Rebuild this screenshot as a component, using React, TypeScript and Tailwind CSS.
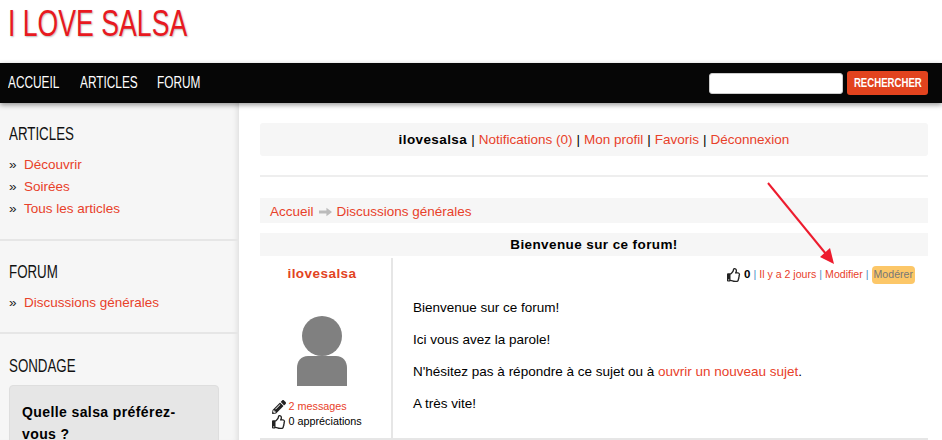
import { FaPencilAlt, FaRegThumbsUp } from "react-icons/fa";

// pas de police étroite installée : on resserre Liberation Sans à la main
function Narrow({ children }: { children: string }) {
  return <span className="inline-block origin-left scale-x-[0.74] whitespace-nowrap">{children}</span>;
}

function SideLink({ children }: { children: string }) {
  return (
    <li className="flex h-[22px] items-center">
      <span className="w-[15px] text-[#222]">»</span>
      <a className="text-[#e8412a]">{children}</a>
    </li>
  );
}

function SideTitle({ children }: { children: string }) {
  return (
    <h2 className="h-[22px] text-[18px] leading-[22px] font-normal text-[#111]">
      <Narrow>{children}</Narrow>
    </h2>
  );
}

export default function App() {
  return (
    <div className="relative h-[440px] w-[942px] overflow-hidden bg-white font-['Liberation_Sans',Arial,sans-serif] text-[13.5px] text-black">
      <header className="h-[63px] pl-[8px] pt-[4px]">
        <h1 className="text-[36px] leading-[40px] font-normal text-[#e8191f] [text-shadow:1px_1px_2px_#bbb]">
          <Narrow>I LOVE SALSA</Narrow>
        </h1>
      </header>

      <nav className="relative z-10 flex h-[40px] items-center justify-between bg-[#060606] pr-[14px] pl-[8px] shadow-[0_2px_5px_rgba(0,0,0,0.4)]">
        <ul className="flex gap-[20px] text-[16px] text-white">
          <li className="w-[52px]"><Narrow>ACCUEIL</Narrow></li>
          <li className="w-[57px]"><Narrow>ARTICLES</Narrow></li>
          <li className="w-[44px]"><Narrow>FORUM</Narrow></li>
        </ul>
        <div className="flex items-center gap-[4px]">
          <input className="h-[21px] w-[134px] rounded-[3px] border border-[#ccc] bg-white" />
          <button className="flex h-[24px] w-[81px] items-center justify-center rounded-[3px] bg-[#e2431e] text-[13px] font-bold text-white">
            <span className="inline-block scale-x-[0.74] whitespace-nowrap">RECHERCHER</span>
          </button>
        </div>
      </nav>

      <div className="flex h-[337px]">
        <aside className="w-[239px] shrink-0 bg-[#f6f6f6] shadow-[inset_-6px_0_6px_-5px_rgba(0,0,0,0.12)]">
          <section className="h-[138px] border-b-2 border-[#e6e6e6] pt-[20px] pl-[9px]">
            <SideTitle>ARTICLES</SideTitle>
            <ul className="mt-[9px]">
              <SideLink>Découvrir</SideLink>
              <SideLink>Soirées</SideLink>
              <SideLink>Tous les articles</SideLink>
            </ul>
          </section>
          <section className="h-[93px] border-b-2 border-[#e6e6e6] pt-[20px] pl-[9px]">
            <SideTitle>FORUM</SideTitle>
            <ul className="mt-[9px]">
              <SideLink>Discussions générales</SideLink>
            </ul>
          </section>
          <section className="pt-[21px] pl-[9px]">
            <SideTitle>SONDAGE</SideTitle>
            <div className="mt-[8px] w-[210px] rounded-[4px] border border-[#dedede] bg-[#e6e6e6] pt-[15px] pr-[30px] pl-[12px]">
              <p className="text-[14px] leading-[22px] font-bold tracking-[0.4px]">Quelle salsa préférez-vous ?</p>
            </div>
          </section>
        </aside>

        <main className="flex-1 px-[14px] pt-[20px] pl-[21px]">
          <div className="flex h-[33px] items-center justify-center rounded-[3px] bg-[#f6f6f6] pt-[1px]">
            <b className="tracking-[0.4px]">ilovesalsa</b>
            <span className="mx-[4px]">|</span>
            <a className="text-[#e8412a]">Notifications (0)</a>
            <span className="mx-[4px]">|</span>
            <a className="text-[#e8412a]">Mon profil</a>
            <span className="mx-[4px]">|</span>
            <a className="text-[#e8412a]">Favoris</a>
            <span className="mx-[4px]">|</span>
            <a className="text-[#e8412a]">Déconnexion</a>
          </div>
          <hr className="mt-[19px] border-t-2 border-[#eee]" />
          <div className="mt-[21px] flex h-[25px] items-center bg-[#f6f6f6] pt-[3px] pl-[10px] text-[#e8412a]">
            <a>Accueil</a>
            <svg viewBox="0 0 14 10" className="mx-[5px] h-[10px] w-[13px] text-[#bbb]" fill="currentColor">
              <path d="M0 3.5 H8 V0.5 L14 5 L8 9.5 V6.5 H0 Z" />
            </svg>
            <a>Discussions générales</a>
          </div>
          <div className="mt-[10px] flex h-[23px] items-center justify-center bg-[#f6f6f6] pt-[2px] font-bold tracking-[0.4px]">Bienvenue sur ce forum!</div>

          <div className="mt-[2px] flex h-[182px] border-b-2 border-[#e6e6e6]">
            <div className="flex w-[133px] shrink-0 flex-col items-center border-r-2 border-[#e6e6e6] pt-[6px] pr-[7px]">
              <b className="tracking-[0.45px] text-[#e2431e]">ilovesalsa</b>
              <svg viewBox="0 0 50 70" className="mt-[32px] h-[70px] w-[50px] shrink-0 text-[#808080]" fill="currentColor">
                <circle cx="25" cy="20" r="20" />
                <path d="M0 70 V52 C0 45 4 40 11 40 H39 C46 40 50 45 50 52 V70 Z" />
              </svg>
              <div className="mt-[13px] w-[101px] text-[10.8px] leading-[15px]">
                <div className="flex items-center gap-[3px] text-[#e8412a]">
                  <FaPencilAlt className="h-[14px] w-[14px] text-[#222]" />
                  2 messages
                </div>
                <div className="flex items-center gap-[3px]">
                  <FaRegThumbsUp className="h-[14px] w-[14px] text-[#222]" />
                  0 appréciations
                </div>
              </div>
            </div>

            <div className="flex-1 pt-[8px]">
              <div className="flex items-center justify-end gap-[3px] pr-[13px] text-[10.6px] text-[#e8412a]">
                <FaRegThumbsUp className="h-[14px] w-[14px] text-[#222]" />
                <b className="text-[11.5px] text-black">0</b>
                <span className="text-[#4a8fc4]">|</span>
                <a>Il y a 2 jours</a>
                <span className="text-[#4a8fc4]">|</span>
                <a>Modifier</a>
                <span className="text-[#4a8fc4]">|</span>
                <a className="rounded-[4px] bg-[#fcc768] px-[2px] py-[1px] text-[#777]">Modérer</a>
              </div>
              <div className="mt-[16px] pl-[20px] leading-[15px]">
                <p>Bienvenue sur ce forum!</p>
                <p className="mt-[17px]">Ici vous avez la parole!</p>
                <p className="mt-[17px]">
                  N'hésitez pas à répondre à ce sujet ou à <a className="text-[#e8412a]">ouvrir un nouveau sujet</a>.
                </p>
                <p className="mt-[17px]">A très vite!</p>
              </div>
            </div>
          </div>
        </main>
      </div>

      {/* flèche d'annotation par-dessus la page */}
      <svg viewBox="0 0 942 440" className="pointer-events-none absolute inset-0 z-20 h-[440px] w-[942px]">
        <line x1="768" y1="183" x2="826" y2="254" stroke="#ed1c2e" strokeWidth="2" />
        <path d="M834 264 L820 257 L830 248 Z" fill="#ed1c2e" />
      </svg>
    </div>
  );
}
